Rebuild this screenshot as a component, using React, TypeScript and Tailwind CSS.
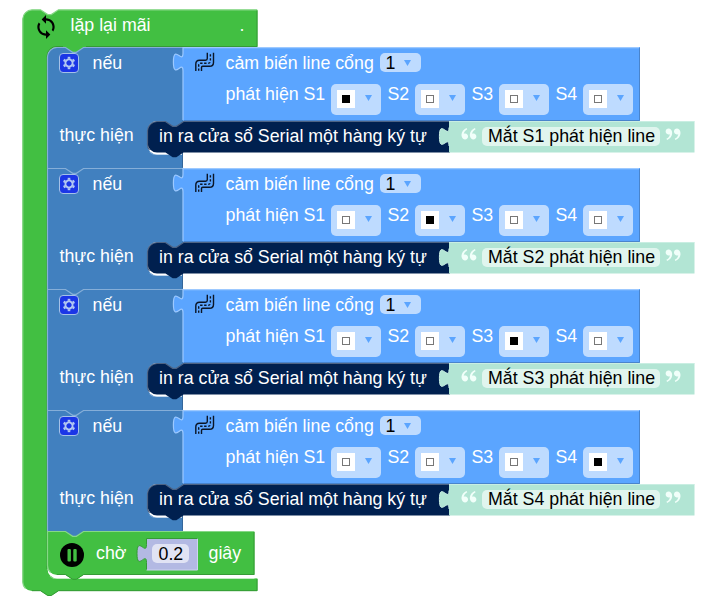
import { ReactNode } from "react";
import { MdSync } from "react-icons/md";
import { RiDoubleQuotesL, RiDoubleQuotesR } from "react-icons/ri";

const LABEL = "block whitespace-pre text-[17.8px] leading-[20px] text-white";

// Vector outline that sits behind a block's fields.
function Shape({ w, h, children }: { w: number; h: number; children: ReactNode }) {
  return (
    <svg className="pointer-events-none absolute left-0 top-0 overflow-visible" width={w} height={h} fill="none">
      {children}
    </svg>
  );
}

function Arrow() {
  return (
    <svg width="7" height="6" viewBox="0 0 7 6" className="shrink-0">
      <path d="M0 0H7L3.5 6Z" fill="#5ba5ff" />
    </svg>
  );
}

function GearIcon() {
  return (
    <svg width="14" height="14" viewBox="-7 -7 14 14" fill="none" stroke="#b3c8f2">
      <circle r="3.6" strokeWidth="1.9" />
      {[0, 60, 120, 180, 240, 300].map((a) => (
        <path key={a} d="M0 -4.2V-6.2" strokeWidth="2.6" transform={`rotate(${a})`} />
      ))}
    </svg>
  );
}

function Sensor({ name, on }: { name: string; on: boolean }) {
  return (
    <div className="flex w-[84px] shrink-0">
      <span className={`${LABEL} w-[27.5px]`}>{name}</span>
      <div className="flex h-[30.5px] w-[50px] items-center rounded-[5px] bg-[#bedbff] pl-[6px]">
        <div className="flex size-[18px] items-center justify-center bg-white">
          <div className={on ? "size-[8px] bg-black" : "size-[8px] border border-[#777] bg-white"} />
        </div>
        <div className="mb-[2px] ml-[9.5px]"><Arrow /></div>
      </div>
    </div>
  );
}

function LineIcon() {
  return (
    <svg width="20" height="20" viewBox="0 0 20 20" fill="none" stroke="#0b1526" strokeWidth="1.4">
      <path d="M.8 19V12Q.8 8.200 4.500 8.200H10.500Q12.300 8.200 12.300 6.500V.8" />
      <path d="M6.500 19V15.500Q6.500 14.300 7.700 14.300H14.500Q18.500 14.300 18.500 10.500V.8" />
      <path d="M3.700 18.800V13Q3.700 11.300 5.200 11.300H13Q15.400 11.300 15.400 9V1" strokeDasharray="2.400 1.600" />
    </svg>
  );
}

function SensorBlock({ active }: { active: number }) {
  return (
    <div className="relative h-[74px] w-[457px] shrink-0">
      <Shape w={457} h={74}>
        <path d="M0 0H457V74H0V24C0 12-9.6 33.6-9.6 15S0 18 0 6Z" fill="#5ba5ff" />
        <path d="M0 74V24C0 12-9.6 33.6-9.6 15S0 18 0 6V.6H456" stroke="#9dc9ff" strokeWidth="1.2" />
        <path d="M.5 73.5H456.5V1" stroke="#4984cc" />
      </Shape>
      <div className="relative flex pl-[12px] pt-[5px]">
        <LineIcon />
        <span className={`${LABEL} ml-[10.5px] mt-px w-[154px]`}>cảm biến line cổng</span>
        <div className="mt-px flex h-[19px] w-[41px] items-center rounded-[5px] bg-[#bedbff] pl-[6px]">
          <span className="w-[18.5px] pt-px text-[17.8px] leading-[19px] text-black">1</span>
          <Arrow />
        </div>
      </div>
      <div className="relative flex pl-[42.5px] pt-[11px]">
        <span className={`${LABEL} w-[78px]`}>phát hiện </span>
        {["S1", "S2", "S3", "S4"].map((s, i) => <Sensor key={s} name={s} on={i === active} />)}
      </div>
    </div>
  );
}

function PrintBlock({ text }: { text: string }) {
  return (
    <div className="relative ml-[100px] flex h-[32px] w-[548px]">
      <Shape w={548} h={32}>
        <path d="M16 -1H36V7H16Z" fill="#4180bf" />
        <path d="M36 0H39V2H36Z" fill="#4984cc" />
        <path d="M.5 10A9.6 9.6 0 0 1 10 .5H18.5l7.2 4.8h3.6L36.5.5H303V31.5H36.5l-7.2 4.8h-3.6l-7.2-4.8H10A9.6 9.6 0 0 1 .5 22Z" fill="#00204f" />
        <path d="M2.5 29A9.6 9.6 0 0 1 .5 22V10A9.6 9.6 0 0 1 10 .5H18.5l7.2 4.8h3.6L36.5.5H302" stroke="#4d6384" strokeWidth="1.2" />
        <path d="M302 0H547.5V31.5H302V24.5C302 12.5 292.4 34 292.4 15.5S302 18.500 302 6.500Z" fill="#b2e5d4" />
        <path d="M302 25C302 12.500 292.400 34 292.400 15.500S302 18.500 302 6.500M302 .5H547" stroke="#c9eee2" />
      </Shape>
      <span className={`${LABEL} relative mt-[5px] w-[302px] shrink-0 pl-[12px]`}>in ra cửa sổ Serial một hàng ký tự</span>
      <div className="relative flex h-[32px] pl-[10px] pt-[6px]">
        <RiDoubleQuotesL size={20} color="#f1fffa" className="mt-[-3px]" />
        <span className="ml-[3px] block h-[19px] w-[178px] whitespace-pre rounded-[5px] bg-[#e0f5ee] pl-[6px] text-[17.8px] leading-[19px] text-black">{text}</span>
        <RiDoubleQuotesR size={20} color="#f1fffa" className="ml-[3px] mt-[-3px]" />
      </div>
    </div>
  );
}

function IfBlock({ index }: { index: number }) {
  const first = index === 0;
  const top = "H18.500l7.200 4.800h3.600L36.500 .5H136";
  const start = first ? "M.5 10A9.600 9.600 0 0 1 10 .5" : "M.5 .5";
  return (
    <div className="relative h-[121px] w-[648px]">
      <Shape w={648} h={121}>
        <path d="M16 -1H39V7H16Z" fill={first ? "#42bf42" : "#4180bf"} />
        <path d={`${start}${top}V74H110A9.600 9.600 0 0 0 100.500 84V98A9.600 9.600 0 0 0 110 107.500H136V121H.5Z`} fill="#4180bf" />
        <path d={`M.5 121V${first ? "10A9.600 9.600 0 0 1 10 .5" : ".5"}${top}`} stroke="#85aed8" strokeWidth="1.2" />
        <path d="M102.500 105A9.600 9.600 0 0 0 110 107.500H135.500" stroke="#85aed8" />
        <path d="M101 94V98A9.600 9.600 0 0 0 110 107.500H136V104H104Z" fill="white" />
        <path d="M135.500 106V120.500" stroke="#34669a" />
      </Shape>
      <div className="relative flex h-[74px]">
        <div className="flex w-[136px] shrink-0 pl-[12px] pt-[6px]">
          <div className="flex size-[20px] items-center justify-center rounded-[4px] border-[1.5px] border-[#a5c1e8] bg-[#1b36e6]">
            <GearIcon />
          </div>
          <span className={`${LABEL} ml-[13.5px]`}>nếu</span>
        </div>
        <SensorBlock active={index} />
      </div>
      <div className="relative flex">
        <span className={`${LABEL} w-0 pl-[12.5px] pt-[4px]`}>thực hiện</span>
        <div className="ml-[-12.5px]">
          <PrintBlock text={`Mắt S${index + 1} phát hiện line`} />
        </div>
      </div>
    </div>
  );
}

function WaitBlock() {
  return (
    <div className="relative h-[48px] w-[208px]">
      <Shape w={208} h={48}>
        <path d="M16 -1H39V7H16Z" fill="#4180bf" />
        <path d="M1 30V38A9.600 9.600 0 0 0 10 47.500H207.500V43H10Z" fill="white" />
        <path d="M.5 .5H18.500l7.200 4.800h3.600L36.500 .5H207.500V44H36.500l-7.200 4.800h-3.600l-7.200-4.800H10A9.600 9.600 0 0 1 .5 34.500Z" fill="#42bf42" />
        <path d="M3.500 41.500A9.600 9.600 0 0 1 .5 34.500V.5H18.500l7.200 4.800h3.600L36.500 .5H207" stroke="#86d886" strokeWidth="1.2" />
        <path d="M10 43.500H18.500l7.200 4.800h3.600l7.200-4.800H207V1" stroke="#359a35" />
        <path d="M99.500 7.500H150.500V39H99.500V31.500C99.500 19.500 90 41 90 22.500S99.500 25.500 99.500 13.500Z" fill="#b3b9e3" />
        <path d="M99.500 39V31.500C99.500 19.500 90 41 90 22.500S99.500 25.500 99.500 13.500V7.500H150" stroke="#359a35" />
        <path d="M99.500 39H150.500V8" stroke="#cdd3ef" />
      </Shape>
      <div className="relative flex pl-[12.5px] pt-[11.5px]">
        <svg width="24" height="24" viewBox="0 0 24 24">
          <circle cx="12" cy="12" r="12" fill="black" />
          <rect x="7.500" y="6" width="3.400" height="12.400" rx="1" fill="#42bf42" />
          <rect x="13.300" y="6" width="3.400" height="12.400" rx="1" fill="#42bf42" />
        </svg>
        <span className={`${LABEL} ml-[12.500px] w-[56px]`}>chờ</span>
        <span className="mt-[1px] block h-[19px] w-[37px] rounded-[5px] bg-[#e1e3f4] pl-[6.500px] pt-px text-[17.8px] leading-[19px] text-black">0.2</span>
        <span className={`${LABEL} ml-[19.500px]`}>giây</span>
      </div>
    </div>
  );
}

export default function App() {
  return (
    <div className="h-[608px] w-[703px] overflow-hidden bg-white pl-[22px] pt-[9px] font-['Liberation_Sans',Arial,sans-serif]">
      <div className="relative w-[681px]">
        <Shape w={236} h={588}>
          <path d="M.5 10A9.600 9.600 0 0 1 10 .8H18.500l7.200 4.800h3.600L36.500 .8H235.500V38H35A9.600 9.600 0 0 0 25.500 47V560A9.600 9.600 0 0 0 35 569.500H235.500V582H36.500l-7.200 4.800h-3.600l-7.200-4.800H10A9.600 9.600 0 0 1 .5 572Z" fill="#42bf42" />
          <path d="M3.500 579.500A9.600 9.600 0 0 1 .8 572V10A9.600 9.600 0 0 1 10 .8H18.500l7.200 4.800h3.600L36.500 .8H235M28 567A9.600 9.600 0 0 0 35 569.500H235" stroke="#86d886" strokeWidth="1.200" />
          <path d="M10 581.700H18.500l7.200 4.800h3.600l7.200-4.800H235V570M235 1.500V37.500H35A9.600 9.600 0 0 0 25 47V560" stroke="#359a35" />
        </Shape>
        <div className="relative flex h-[38px] pl-[11px] pt-[5px]">
          <MdSync size={26} color="black" />
          <span className={`${LABEL} ml-[11.5px] mt-[1px] w-[169px]`}>lặp lại mãi</span>
          <span className={`${LABEL} mt-[1px]`}>.</span>
        </div>
        <div className="relative flex flex-col pl-[25px]">
          {[0, 1, 2, 3].map((i) => <IfBlock key={i} index={i} />)}
          <WaitBlock />
        </div>
      </div>
    </div>
  );
}
